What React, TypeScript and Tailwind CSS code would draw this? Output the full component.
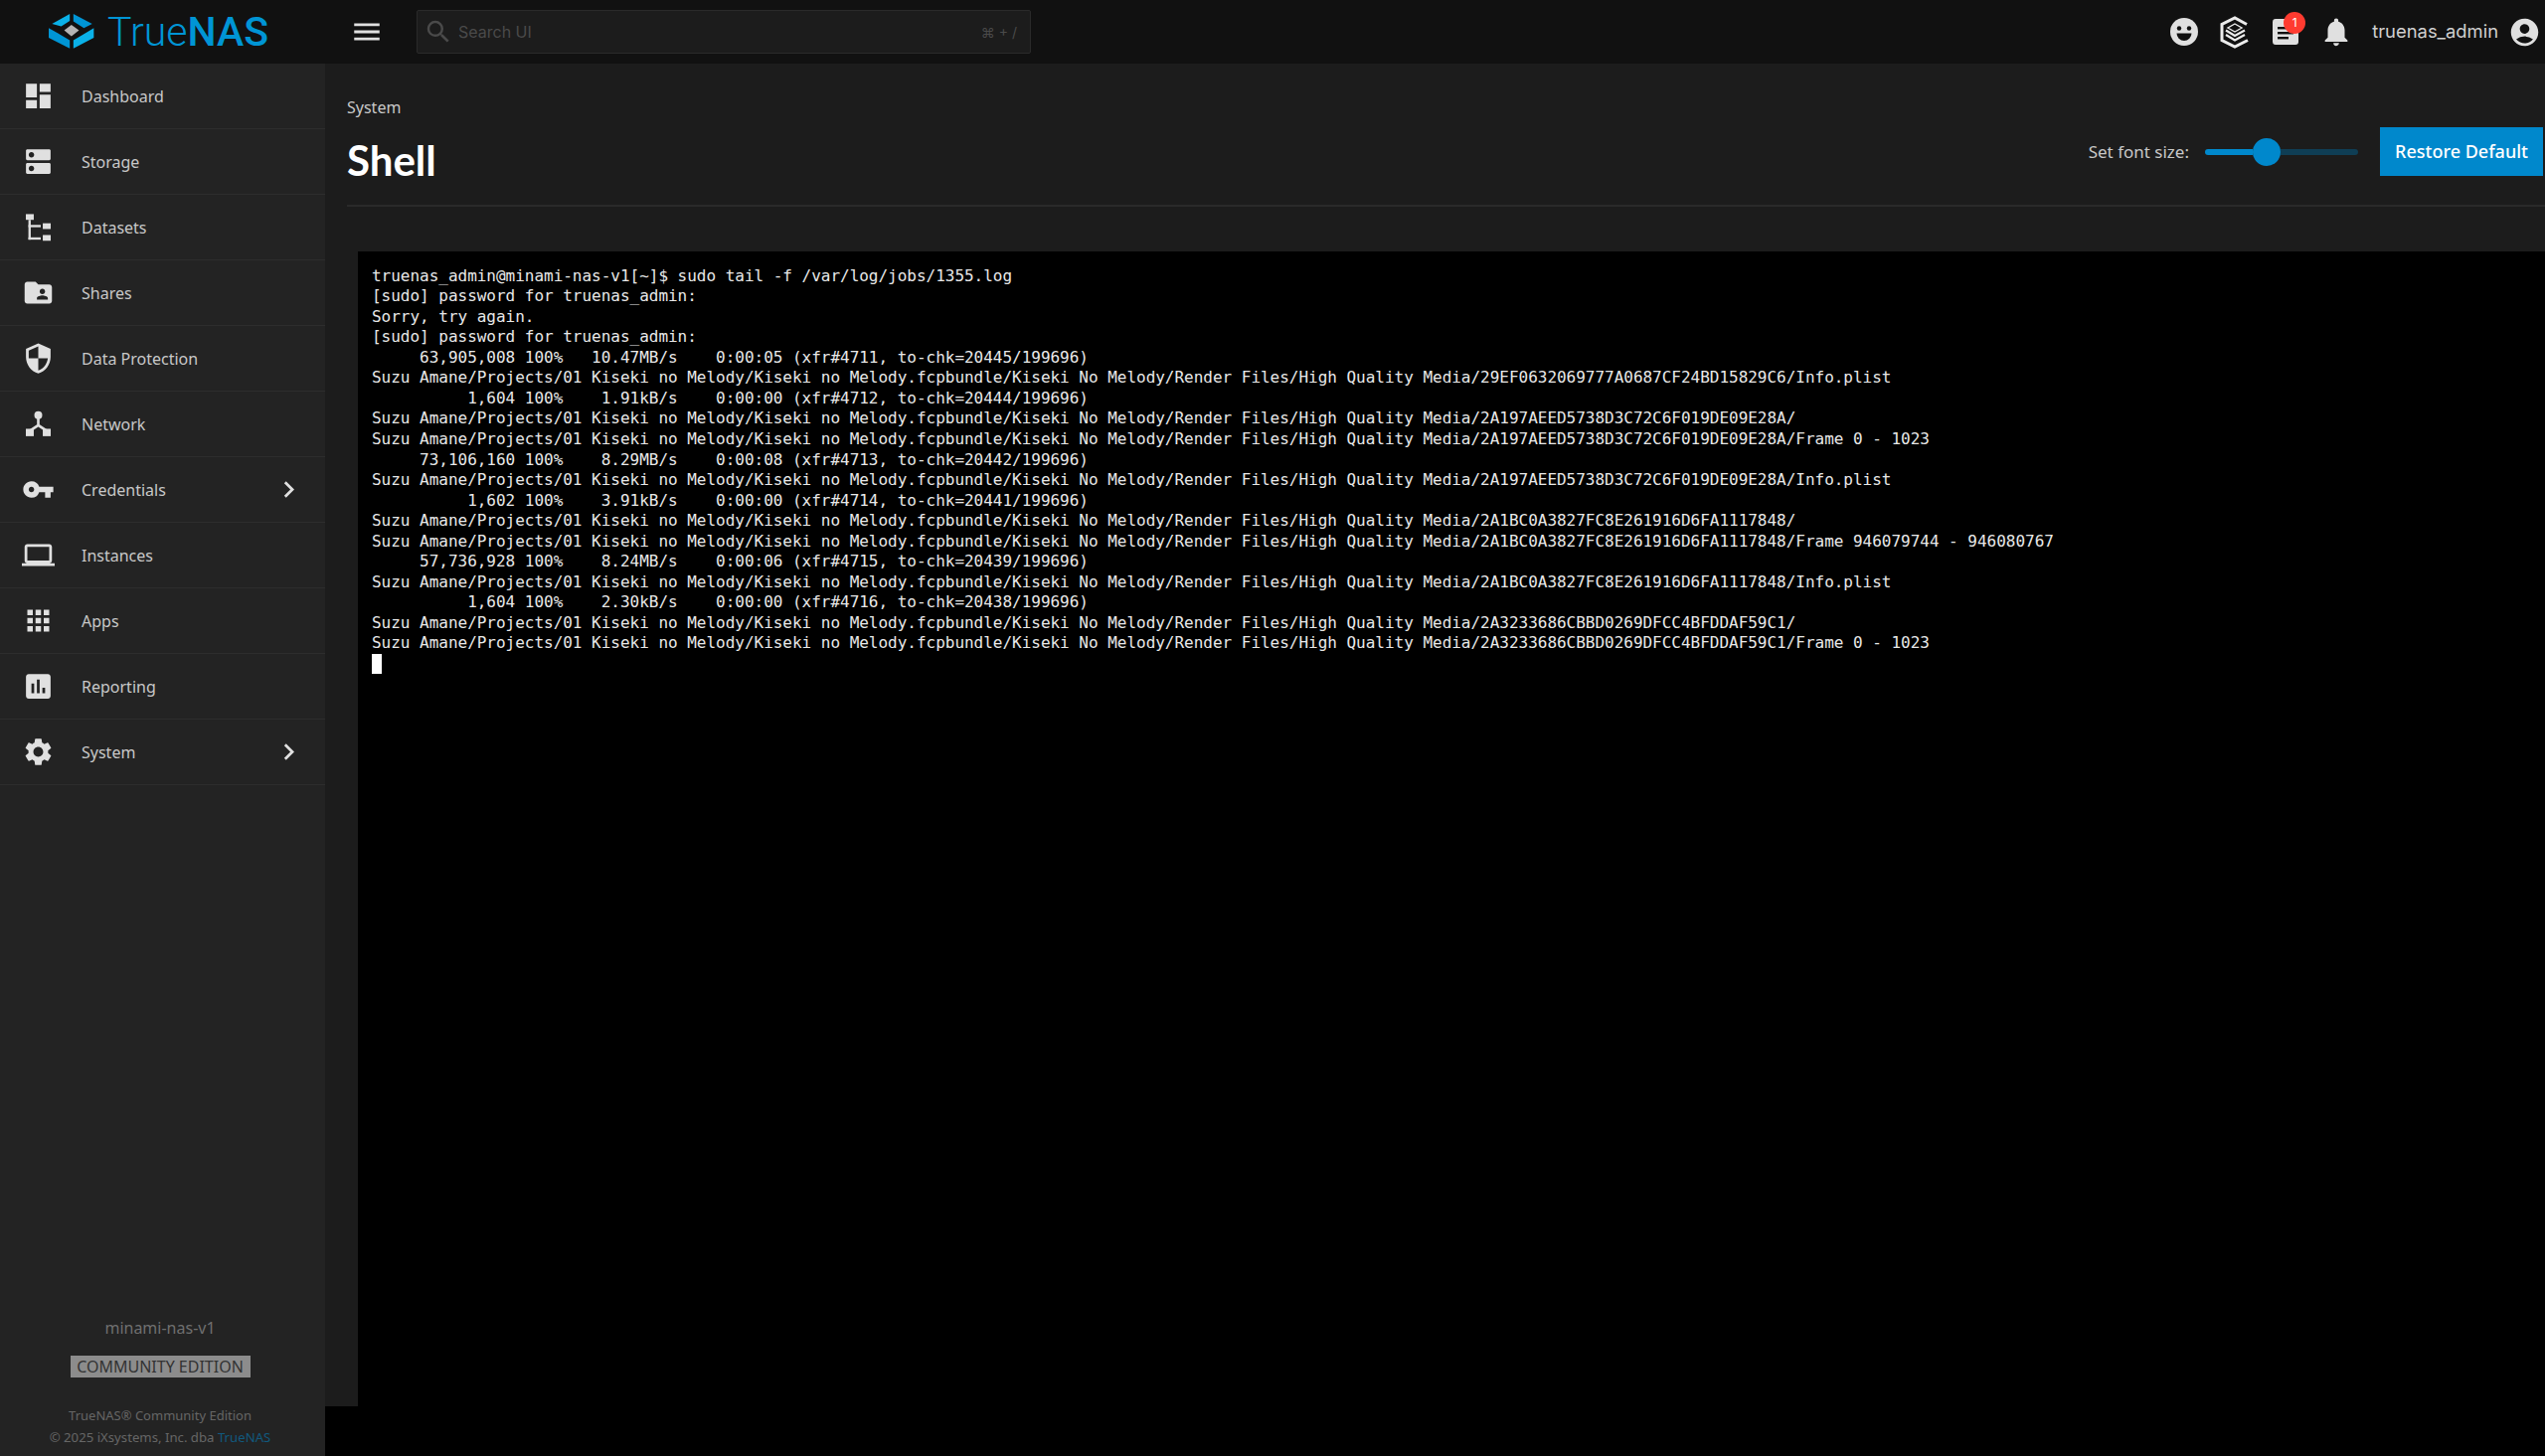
import React from "react";
import {
  MdDashboard,
  MdDns,
  MdFolderShared,
  MdSecurity,
  MdVpnKey,
  MdLaptop,
  MdApps,
  MdAssessment,
  MdSettings,
  MdChevronRight,
  MdNotifications,
  MdAccountCircle,
  MdSearch,
  MdMenu,
} from "react-icons/md";

function DatasetsIcon({ className }: { className?: string }) {
  return (
    <svg viewBox="0 0 24 24" fill="currentColor" className={className}>
      <rect x="2.9" y="2.5" width="5.8" height="4.2" />
      <rect x="4.8" y="6.7" width="1.7" height="14.5" />
      <rect x="4.8" y="10.4" width="9" height="1.7" />
      <rect x="4.8" y="19.5" width="9" height="1.7" />
      <rect x="15.3" y="9.2" width="5.8" height="4.2" />
      <rect x="15.3" y="17.8" width="5.8" height="4.2" />
    </svg>
  );
}

function NetworkIcon({ className }: { className?: string }) {
  return (
    <svg viewBox="0 0 24 24" fill="currentColor" className={className}>
      <circle cx="12" cy="5.7" r="2.9" />
      <path d="M12 6v7.5M12 13l-6 4M12 13l6 4" stroke="currentColor" strokeWidth="1.9" fill="none" />
      <rect x="2.9" y="15.6" width="5.8" height="5.4" />
      <rect x="15.3" y="15.6" width="5.8" height="5.4" />
    </svg>
  );
}

const navItems = [
  { label: "Dashboard", icon: MdDashboard },
  { label: "Storage", icon: MdDns },
  { label: "Datasets", icon: DatasetsIcon },
  { label: "Shares", icon: MdFolderShared },
  { label: "Data Protection", icon: MdSecurity },
  { label: "Network", icon: NetworkIcon },
  { label: "Credentials", icon: MdVpnKey, arrow: true },
  { label: "Instances", icon: MdLaptop },
  { label: "Apps", icon: MdApps },
  { label: "Reporting", icon: MdAssessment },
  { label: "System", icon: MdSettings, arrow: true },
];

const base =
  "Suzu Amane/Projects/01 Kiseki no Melody/Kiseki no Melody.fcpbundle/Kiseki No Melody/Render Files/High Quality Media/";

const logLines = [
  "truenas_admin@minami-nas-v1[~]$ sudo tail -f /var/log/jobs/1355.log",
  "[sudo] password for truenas_admin:",
  "Sorry, try again.",
  "[sudo] password for truenas_admin:",
  "     63,905,008 100%   10.47MB/s    0:00:05 (xfr#4711, to-chk=20445/199696)",
  base + "29EF0632069777A0687CF24BD15829C6/Info.plist",
  "          1,604 100%    1.91kB/s    0:00:00 (xfr#4712, to-chk=20444/199696)",
  base + "2A197AEED5738D3C72C6F019DE09E28A/",
  base + "2A197AEED5738D3C72C6F019DE09E28A/Frame 0 - 1023",
  "     73,106,160 100%    8.29MB/s    0:00:08 (xfr#4713, to-chk=20442/199696)",
  base + "2A197AEED5738D3C72C6F019DE09E28A/Info.plist",
  "          1,602 100%    3.91kB/s    0:00:00 (xfr#4714, to-chk=20441/199696)",
  base + "2A1BC0A3827FC8E261916D6FA1117848/",
  base + "2A1BC0A3827FC8E261916D6FA1117848/Frame 946079744 - 946080767",
  "     57,736,928 100%    8.24MB/s    0:00:06 (xfr#4715, to-chk=20439/199696)",
  base + "2A1BC0A3827FC8E261916D6FA1117848/Info.plist",
  "          1,604 100%    2.30kB/s    0:00:00 (xfr#4716, to-chk=20438/199696)",
  base + "2A3233686CBBD0269DFCC4BFDDAF59C1/",
  base + "2A3233686CBBD0269DFCC4BFDDAF59C1/Frame 0 - 1023",
];

function Topbar() {
  return (
    <header className="flex h-[64px] shrink-0 items-center bg-[#111111] font-['Inter',sans-serif]">
      <div className="flex w-[349px] shrink-0 items-center pl-[48px]">
        <svg viewBox="55 10 145 110" className="mt-[-2px] h-[37px] w-[48px]">
          <polygon points="68,42 122,12 122,33 96,50" fill="#0ab1e8" />
          <polygon points="133,12 190,42 165,55 133,35" fill="#0095d5" />
          <polygon points="58,55 85,70 122,92 122,117 58,85" fill="#0095d5" />
          <polygon points="195,55 195,85 133,117 133,92 170,70" fill="#0ab1e8" />
          <polygon points="127,45 150,62 127,80 105,62" fill="#b4b4b4" />
        </svg>
        <span className="ml-[12px] font-['Roboto',sans-serif] text-[41px] font-light leading-none text-[#0095d5]">
          True<span className="font-medium">NAS</span>
        </span>
      </div>
      <MdMenu className="ml-[3px] size-[34px] shrink-0 text-[#e0e0e0]" />
      <div className="ml-[33px] flex h-[44px] w-[618px] items-center rounded-[2px] border border-[#2a2a2a] bg-[#1c1c1c] pl-[6px] pr-[13px] text-[16px] text-[#4a4a4a]">
        <MdSearch className="size-[30px] text-[#4a4a4a]" />
        <span className="ml-[5px]">Search UI</span>
        <span className="ml-auto text-[14px]">⌘ + /</span>
      </div>
      <div className="ml-auto flex items-center pr-[4px]">
        <svg viewBox="0 0 28 28" className="size-[28px]">
          <circle cx="14" cy="14" r="14" fill="#e0e0e0" />
          <circle cx="9" cy="10.5" r="2.2" fill="#111111" />
          <circle cx="19" cy="10.5" r="2.2" fill="#111111" />
          <path d="M6.5 15.5h15a7.5 7.5 0 0 1-15 0z" fill="#111111" />
        </svg>
        <svg viewBox="0 0 30 33" fill="none" stroke="#ececec" className="ml-[22px] h-[33px] w-[30px]">
          <path d="M27 8.5 15 2 2 8.5v16L15 31l13-6.5" strokeWidth="3" />
          <path d="M15 8l7 4-7 4-7-4z" strokeWidth="1.4" />
          <path d="M6 14.5l9 5.5 10-5.5M6 19l9 5.5 10-5.5" strokeWidth="2.2" />
        </svg>
        <div className="relative ml-[23px] size-[26px]">
          <svg viewBox="0 0 26 26" className="size-[26px]">
            <rect width="26" height="26" rx="3" fill="#e0e0e0" />
            <rect x="5" y="8" width="16" height="2.4" fill="#111111" />
            <rect x="5" y="13" width="16" height="2.4" fill="#111111" />
            <rect x="5" y="18" width="11" height="2.4" fill="#111111" />
          </svg>
          <span className="absolute left-[11px] top-[-7px] flex size-[22px] items-center justify-center rounded-full bg-[#ff3b30] text-[12px] text-white">
            1
          </span>
        </div>
        <MdNotifications className="ml-[21px] size-[34px] text-[#e0e0e0]" />
        <span className="ml-[19px] text-[18.4px] text-[#cfcfcf]">truenas_admin</span>
        <MdAccountCircle className="ml-[10px] size-[33px] text-[#e0e0e0]" />
      </div>
    </header>
  );
}

function Sidebar() {
  return (
    <aside className="flex w-[327px] shrink-0 flex-col bg-[#232323] font-['Noto_Sans',sans-serif]">
      <nav>
        {navItems.map(({ label, icon: Icon, arrow }) => (
          <div key={label} className="flex h-[66px] items-center border-b border-[#2d2d2d] pl-[22px]">
            <Icon className="size-[33px] shrink-0 text-[#e0e0e0]" />
            <span className="ml-[27px] text-[16px] text-[#c8c8c8]">{label}</span>
            {arrow ? <MdChevronRight className="ml-auto mr-[20px] size-[33px] text-[#e0e0e0]" /> : null}
          </div>
        ))}
      </nav>
      <div className="mt-auto flex flex-col items-center pb-[8px] pr-[5px]">
        <span className="text-[16px] leading-[22px] text-[#6f6f6f]">minami-nas-v1</span>
        <span className="mt-[17px] flex h-[22px] w-[181px] items-center justify-center bg-[#8c8c8c] text-[16px] text-[#333333]">
          COMMUNITY EDITION
        </span>
        <span className="mt-[27px] text-[13px] leading-[22px] text-[#666666]">TrueNAS® Community Edition</span>
        <span className="text-[13.2px] leading-[22px] text-[#666666]">
          © 2025 iXsystems, Inc. dba <span className="text-[#11597e]">TrueNAS</span>
        </span>
      </div>
    </aside>
  );
}

function PageHeader() {
  return (
    <div className="ml-[22px] flex h-[144px] shrink-0 items-start justify-between border-b-2 border-[#2a2a2a] font-['Noto_Sans',sans-serif]">
      <div>
        <div className="mt-[33px] text-[16px] leading-[22px] text-[#c8c8c8]">System</div>
        <h1 className="mt-[18px] font-['Lato',sans-serif] text-[42px] font-bold leading-[48px] text-white">Shell</h1>
      </div>
      <div className="mr-[2px] mt-[64px] flex items-center">
        <span className="text-[17px] text-[#c8c8c8]">Set font size:</span>
        <div className="ml-[16px] flex w-[154px] items-center">
          <div className="h-[6px] w-[48px] rounded-l-full bg-[#0088cc]" />
          <div className="size-[28px] shrink-0 rounded-full bg-[#0088cc]" />
          <div className="h-[6px] flex-1 rounded-r-full bg-[#0f3e55]" />
        </div>
        <button className="ml-[22px] h-[49px] w-[164px] bg-[#0088cc] text-[18px] font-medium text-white">
          Restore Default
        </button>
      </div>
    </div>
  );
}

function Terminal() {
  return (
    <div className="ml-[33px] mt-[45px] flex-1 bg-black pl-[14px] pt-[14.6px] font-['DejaVu_Sans_Mono',monospace] text-[16px] leading-[20.56px] tracking-[-0.02px] text-[#e8e8e8]">
      {logLines.map((line, i) => (
        <div key={i} className="h-[20.56px] whitespace-pre">
          {line}
        </div>
      ))}
      <div className="h-[20px] w-[10px] bg-white" />
    </div>
  );
}

export default function App() {
  return (
    <div className="flex h-[1465px] w-[2560px] flex-col overflow-hidden bg-black">
      <Topbar />
      <div className="flex min-h-0 flex-1">
        <Sidebar />
        <main className="flex h-[1351px] min-w-0 flex-1 flex-col bg-[#1c1c1c]">
          <PageHeader />
          <Terminal />
        </main>
      </div>
    </div>
  );
}
